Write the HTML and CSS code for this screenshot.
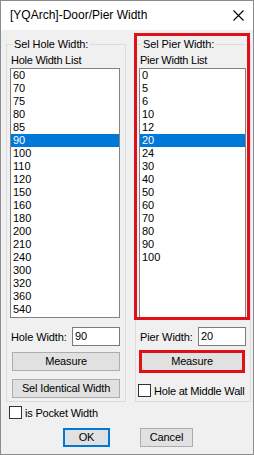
FILE: index.html
```html
<!DOCTYPE html>
<html>
<head>
<meta charset="utf-8">
<link rel="stylesheet" href="styles.css">
</head>
<body>
<div class="window">
  <div class="titlebar">
    <span class="title">[YQArch]-Door/Pier Width</span>
    <svg class="close" width="11" height="11" viewBox="0 0 11 11"><path d="M0.5 0.5 L10.5 10.5 M10.5 0.5 L0.5 10.5" stroke="#000" stroke-width="1.1" fill="none"/></svg>
  </div>
  <div class="content">
    <div class="groups">
      <div class="group group-left">
        <span class="legend">Sel Hole Width:</span>
        <div class="list-label">Hole Width List</div>
        <ul class="list list-left">
          <li>60</li><li>70</li><li>75</li><li>80</li><li>85</li>
          <li class="sel">90</li><li>100</li><li>110</li><li>120</li><li>150</li>
          <li>160</li><li>180</li><li>200</li><li>210</li><li>240</li>
          <li>300</li><li>320</li><li>360</li><li>540</li>
        </ul>
        <div class="field">
          <span class="field-label">Hole Width:</span>
          <span class="input">90</span>
        </div>
        <div class="btn btn-measure">Measure</div>
        <div class="btn btn-ident">Sel Identical Width</div>
      </div>
      <div class="group group-right">
        <span class="legend">Sel Pier Width:</span>
        <div class="list-label">Pier Width List</div>
        <ul class="list list-right">
          <li>0</li><li>5</li><li>6</li><li>10</li><li>12</li>
          <li class="sel">20</li><li>24</li><li>30</li><li>40</li><li>50</li>
          <li>60</li><li>70</li><li>80</li><li>90</li><li>100</li>
        </ul>
        <div class="field">
          <span class="field-label">Pier Width:</span>
          <span class="input">20</span>
        </div>
        <div class="btn btn-measure-r">Measure</div>
        <div class="check check-middle"><span class="box"></span><span class="check-text">Hole at Middle Wall</span></div>
      </div>
    </div>
    <div class="check check-pocket"><span class="box"></span><span class="check-text">is Pocket Width</span></div>
    <div class="actions">
      <div class="btn btn-ok">OK</div>
      <div class="btn btn-cancel">Cancel</div>
    </div>
  </div>
  <div class="hl hl-list"></div>
  <div class="hl hl-measure"></div>
</div>
</body>
</html>
```
FILE: styles.css
```css
* { box-sizing: border-box; }
html, body { margin: 0; padding: 0; background: #fff; }
body {
  font-family: "Liberation Sans", Arial, sans-serif;
  font-size: 11px;
  color: #000;
}
.window {
  position: relative;
  width: 254px;
  height: 455px;
  border: 1px solid #8c8c8c;
  background: #f0f0f0;
  display: flex;
  flex-direction: column;
}
.titlebar {
  height: 29px;
  background: #fff;
  display: flex;
  align-items: center;
  padding-left: 9px;
  padding-right: 9px;
  flex: none;
}
.title {
  font-size: 12px;
  flex: 1;
  padding-bottom: 1px;
}
.close { display: block; }
.content {
  padding: 14px 2px 0 5px;
  display: flex;
  flex-direction: column;
}
.groups {
  display: flex;
  gap: 9px;
}
.group {
  border: 1px solid #dcdcdc;
  height: 358px;
  display: flex;
  flex-direction: column;
  align-items: flex-start;
  padding-left: 3px;
}
.group-left { width: 120px; }
.group-right { width: 116px; }
.legend {
  display: block;
  height: 14px;
  line-height: 14px;
  margin-top: -8px;
  margin-left: 2px;
  padding: 0 2px;
  background: #f0f0f0;
  letter-spacing: -0.1px;
}
.list-label {
  margin-top: 2px;
  height: 14px;
  line-height: 14px;
  padding-left: 1px;
  letter-spacing: -0.25px;
}
.list {
  list-style: none;
  margin: 1px 0 0 0;
  padding: 0;
  height: 250px;
  background: #fff;
  border: 1px solid #828282;
  overflow: hidden;
}
.list-left { width: 110px; }
.list-right { width: 107px; }
.list li {
  height: 13px;
  line-height: 13px;
  padding-left: 2px;
}
.list li.sel {
  background: #0078d7;
  color: #fff;
}
.field {
  margin-top: 9px;
  height: 19px;
  display: flex;
  align-items: center;
}
.group-left .field { width: 110px; }
.group-right .field { width: 107px; }
.field-label {
  padding-left: 1px;
  flex: 1;
  letter-spacing: -0.1px;
}
.input {
  width: 48px;
  height: 19px;
  border: 1px solid #7a7a7a;
  background: #fff;
  line-height: 17px;
  padding-left: 2px;
}
.btn {
  height: 19px;
  line-height: 17px;
  background: #e1e1e1;
  border: 1px solid #adadad;
  text-align: center;
  letter-spacing: -0.15px;
}
.btn-measure { margin-top: 6px; margin-left: 2px; width: 108px; }
.btn-ident { margin-top: 8px; margin-left: 2px; width: 108px; }
.btn-measure-r { margin-top: 6px; width: 106px; }
.check {
  display: flex;
  align-items: center;
  height: 13px;
  gap: 3px;
}
.check-text { letter-spacing: -0.2px; white-space: nowrap; }
.check .box {
  width: 13px;
  height: 13px;
  border: 1px solid #333;
  background: #fff;
  flex: none;
}
.check-middle { margin-top: 13px; margin-left: -1px; }
.check-pocket { margin-top: 4px; margin-left: 3px; }
.actions {
  display: flex;
  margin-top: 9px;
}
.btn-ok {
  width: 47px;
  margin-left: 57px;
  border-color: #0078d7;
  box-shadow: inset 0 0 0 1px #0078d7;
}
.btn-cancel {
  width: 53px;
  margin-left: 30px;
}
.hl {
  position: absolute;
  border: 3px solid #e0101a;
}
.hl-list { left: 133px; top: 32px; width: 116px; height: 287px; }
.hl-measure { left: 138px; top: 349px; width: 106px; height: 23px; }
```
